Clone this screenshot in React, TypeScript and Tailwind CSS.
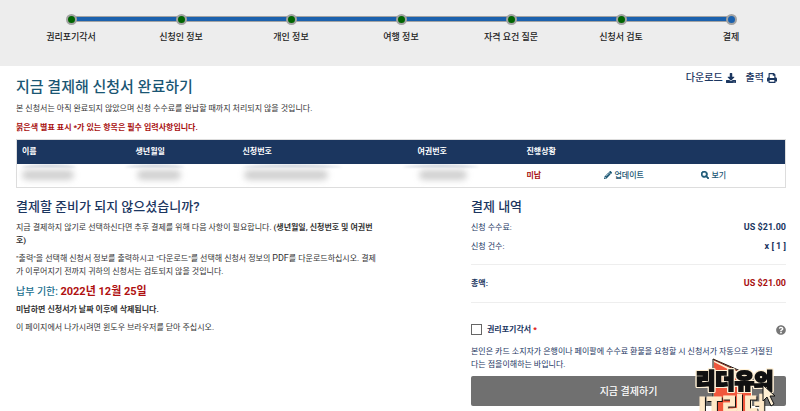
import type { ReactNode } from "react";
import { FaDownload, FaPencilAlt, FaSearch, FaQuestionCircle } from "react-icons/fa";

const steps = ["권리포기각서", "신청인 정보", "개인 정보", "여행 정보", "자격 요건 질문", "신청서 검토", "결제"];

function Progress() {
  const last = steps.length - 1;
  return (
    <nav aria-label="진행 단계" className="h-[66px] bg-[#ededed] pt-[13px] pr-[14px] pl-4">
      <ol className="grid grid-cols-7">
        {steps.map((step, i) => (
          <li key={step} className="text-center">
            <div className="flex h-3 items-center">
              <span className={i === 0 ? "flex-1" : "h-[6px] flex-1 border-y border-[#a3a3a3] bg-[#1b61ad]"} />
              <span
                className={`relative z-10 -mx-[3px] size-[11px] rounded-full border-2 border-[#a3a3a3] ${
                  i === last ? "bg-[#1b61ad]" : "bg-[#006400]"
                }`}
              />
              <span className={i === last ? "flex-1" : "h-[6px] flex-1 border-y border-[#a3a3a3] bg-[#1b61ad]"} />
            </div>
            <span className="mt-[6px] block text-[9px] leading-3 font-medium text-[#222]">{step}</span>
          </li>
        ))}
      </ol>
    </nav>
  );
}

function PrintIcon() {
  return (
    <svg viewBox="0 0 26 26" className="size-[10px]" fill="currentColor" aria-hidden="true">
      <path
        fillRule="evenodd"
        d="M5 0h13l4 4v7a4 4 0 0 1 4 4v7h-4v4H4v-4H0v-7a4 4 0 0 1 4-4V1q0-1 1-1zM7 3v10h12V7h-4V3zM7 18v5h12v-5z"
      />
    </svg>
  );
}

function Redacted({ streak, blob }: { streak: string; blob: string }) {
  return (
    <div aria-hidden="true" className="h-[22px] pt-px">
      <div className={`h-[5px] rounded-t-[50%] border-t-2 border-[#1b365f]/25 blur-[1px] ${streak}`} />
      <div className={`h-[10px] rounded-full bg-[#777]/35 blur-[3px] ${blob}`} />
    </div>
  );
}

function Amount({ label, children, total = false }: { label: string; children: ReactNode; total?: boolean }) {
  return (
    <div className="flex items-center justify-between leading-[19px]">
      <dt className={total ? "font-bold" : ""}>{label}</dt>
      <dd className={total ? "text-[9px] font-bold text-[#a80f0f]" : "text-[9px] font-bold"}>{children}</dd>
    </div>
  );
}

function Watermark() {
  return (
    <svg
      viewBox="0 0 90 61"
      className="pointer-events-none absolute right-5 bottom-0 h-[61px] w-[90px]"
      fontFamily="'Noto Sans CJK KR', sans-serif"
      fontWeight="900"
      aria-hidden="true"
    >
      <path d="M23 7 62 25V61H23z" fill="#fff0d5" />
      <path d="M24 11 61 30V61H24z" fill="#f0563c" />
      <path d="M23 61V8L62 25" fill="none" stroke="#111" strokeWidth="1" />
      <path d="M24 9 50 21" fill="none" stroke="#7a2016" strokeWidth="1" />
      <text
        x="6"
        y="37"
        fontSize="21"
        fill="#111"
        stroke="#111"
        strokeWidth="2"
        strokeLinejoin="miter"
        className="[filter:drop-shadow(1px_0_0_#fff0d5)_drop-shadow(-1px_0_0_#fff0d5)_drop-shadow(0_1px_0_#fff0d5)_drop-shadow(0_-1px_0_#fff0d5)]"
      >
        리더유의
      </text>
      <text
        x="8"
        y="64"
        fontSize="24"
        fill="#ffe9c8"
        stroke="#ffe9c8"
        strokeWidth="1"
        className="[filter:drop-shadow(1px_1px_0_#111)]"
      >
        IT리더
      </text>
      <path d="M73 34v16l4-4 4 9 3-2-4-8h5z" fill="#fff0d5" stroke="#111" strokeWidth="1" />
    </svg>
  );
}

export default function App() {
  return (
    <div className="relative overflow-hidden bg-white font-[Roboto,'Noto_Sans_CJK_KR',sans-serif] text-[8px] leading-[13px] text-[#333]">
      <Progress />
      <main className="pr-[14px] pl-4">
        <div className="flex items-start justify-between">
          <h1 className="mt-[9px] text-[15px] leading-6 font-medium text-[#1a5673]">지금 결제해 신청서 완료하기</h1>
          <div className="mt-[5px] mr-[9px] flex gap-[10px] text-[10px] leading-[14px] font-medium text-[#1b365f]">
            <button className="flex items-center gap-[3px]">다운로드 <FaDownload /></button>
            <button className="flex items-center gap-[3px]">출력 <PrintIcon /></button>
          </div>
        </div>
        <p className="mt-[3px]">본 신청서는 아직 완료되지 않았으며 신청 수수료를 완납할 때까지 처리되지 않을 것입니다.</p>
        <p className="mt-[6px] font-bold text-[#a80f0f]">붉은색 별표 표시 *가 있는 항목은 필수 입력사항입니다.</p>

        <table className="mt-[5px] w-full table-fixed border border-[#ddd] text-left">
          <colgroup>
            <col className="w-[114px]" />
            <col className="w-[107px]" />
            <col className="w-[175px]" />
            <col className="w-[109px]" />
            <col className="w-[77px]" />
            <col className="w-[97px]" />
            <col />
          </colgroup>
          <thead className="bg-[#1b365f] text-white">
            <tr className="h-6">
              {["이름", "생년월일", "신청번호", "여권번호", "진행상황"].map((h) => (
                <th key={h} className="pl-[5px] font-bold">{h}</th>
              ))}
              <td />
              <td />
            </tr>
          </thead>
          <tbody>
            <tr className="h-6 text-[#1a5673]">
              <td><Redacted streak="ml-1 w-[56px]" blob="ml-[5px] w-[52px]" /></td>
              <td><Redacted streak="-ml-[6px] w-[60px]" blob="ml-[6px] w-[44px]" /></td>
              <td><Redacted streak="ml-1 w-[100px]" blob="ml-[6px] w-[84px]" /></td>
              <td><Redacted streak="-ml-[10px] w-[76px]" blob="ml-[6px] w-[48px]" /></td>
              <td className="pl-[5px] font-bold text-[#a80f0f]">미납</td>
              <td><a href="#update" className="flex items-center gap-[3px] pl-[5px] font-medium"><FaPencilAlt />업데이트</a></td>
              <td><a href="#view" className="flex items-center gap-[3px] pl-[5px] font-medium"><FaSearch stroke="currentColor" strokeWidth="40" />보기</a></td>
            </tr>
          </tbody>
        </table>

        <div className="mt-[9px] grid grid-cols-[455fr_315fr]">
          <section className="pr-16">
            <h2 className="text-[13px] leading-5 font-medium text-[#1b365f]">결제할 준비가 되지 않으셨습니까?</h2>
            <p className="mt-1">
              지금 결제하지 않기로 선택하신다면 추후 결제를 위해 다음 사항이 필요합니다. <b>(생년월일, 신청번호 및 여권번<br />호)</b>
            </p>
            <p className="mt-[5px]">
              "출력"을 선택해 신청서 정보를 출력하시고 "다운로드"를 선택해 신청서 정보의 <span className="text-[9px]">PDF</span>를 다운로드하십시오. 결제<br />
              가 이루어지기 전까지 귀하의 신청서는 검토되지 않을 것입니다.
            </p>
            <h3 className="mt-[6px] text-[10px] leading-4 font-medium text-[#1a6f8e]">
              납부 기한: <b className="text-[11px] text-[#b01010]">2022년 12월 25일</b>
            </h3>
            <p className="mt-[3px] font-bold">미납하면 신청서가 날짜 이후에 삭제됩니다.</p>
            <p className="mt-[5px]">이 페이지에서 나가시려면 윈도우 브라우저를 닫아 주십시오.</p>
          </section>

          <section className="text-[#1b365f]">
            <h2 className="text-[13px] leading-5 font-medium">결제 내역</h2>
            <dl className="mt-px">
              <Amount label="신청 수수료:">US $21.00</Amount>
              <Amount label="신청 건수:">x [ 1 ]</Amount>
              <div className="my-2 border-y border-[#eee] py-[9px]">
                <Amount label="총액:" total>US $21.00</Amount>
              </div>
            </dl>
            <div className="mt-5 flex items-center justify-between">
              <div className="flex items-center gap-[5px]">
                <input id="waiver" type="checkbox" className="size-[11px] appearance-none border border-[#666] bg-white" />
                <label htmlFor="waiver" className="font-bold">권리포기각서 <span className="text-[#d00]">*</span></label>
              </div>
              <button aria-label="도움말" className="text-[10px] text-[#777]"><FaQuestionCircle /></button>
            </div>
            <p className="mt-[9px]">
              본인은 카드 소지자가 은행이나 페이팔에 수수료 환불을 요청할 시 신청서가 자동으로 거절된<br />
              다는 점을이해하는 바입니다.
            </p>
            <button className="mt-[5px] mb-[6px] h-[30px] w-full rounded-[2px] bg-[#707070] text-[10px] font-medium text-white">지금 결제하기</button>
          </section>
        </div>
      </main>
      <Watermark />
    </div>
  );
}
